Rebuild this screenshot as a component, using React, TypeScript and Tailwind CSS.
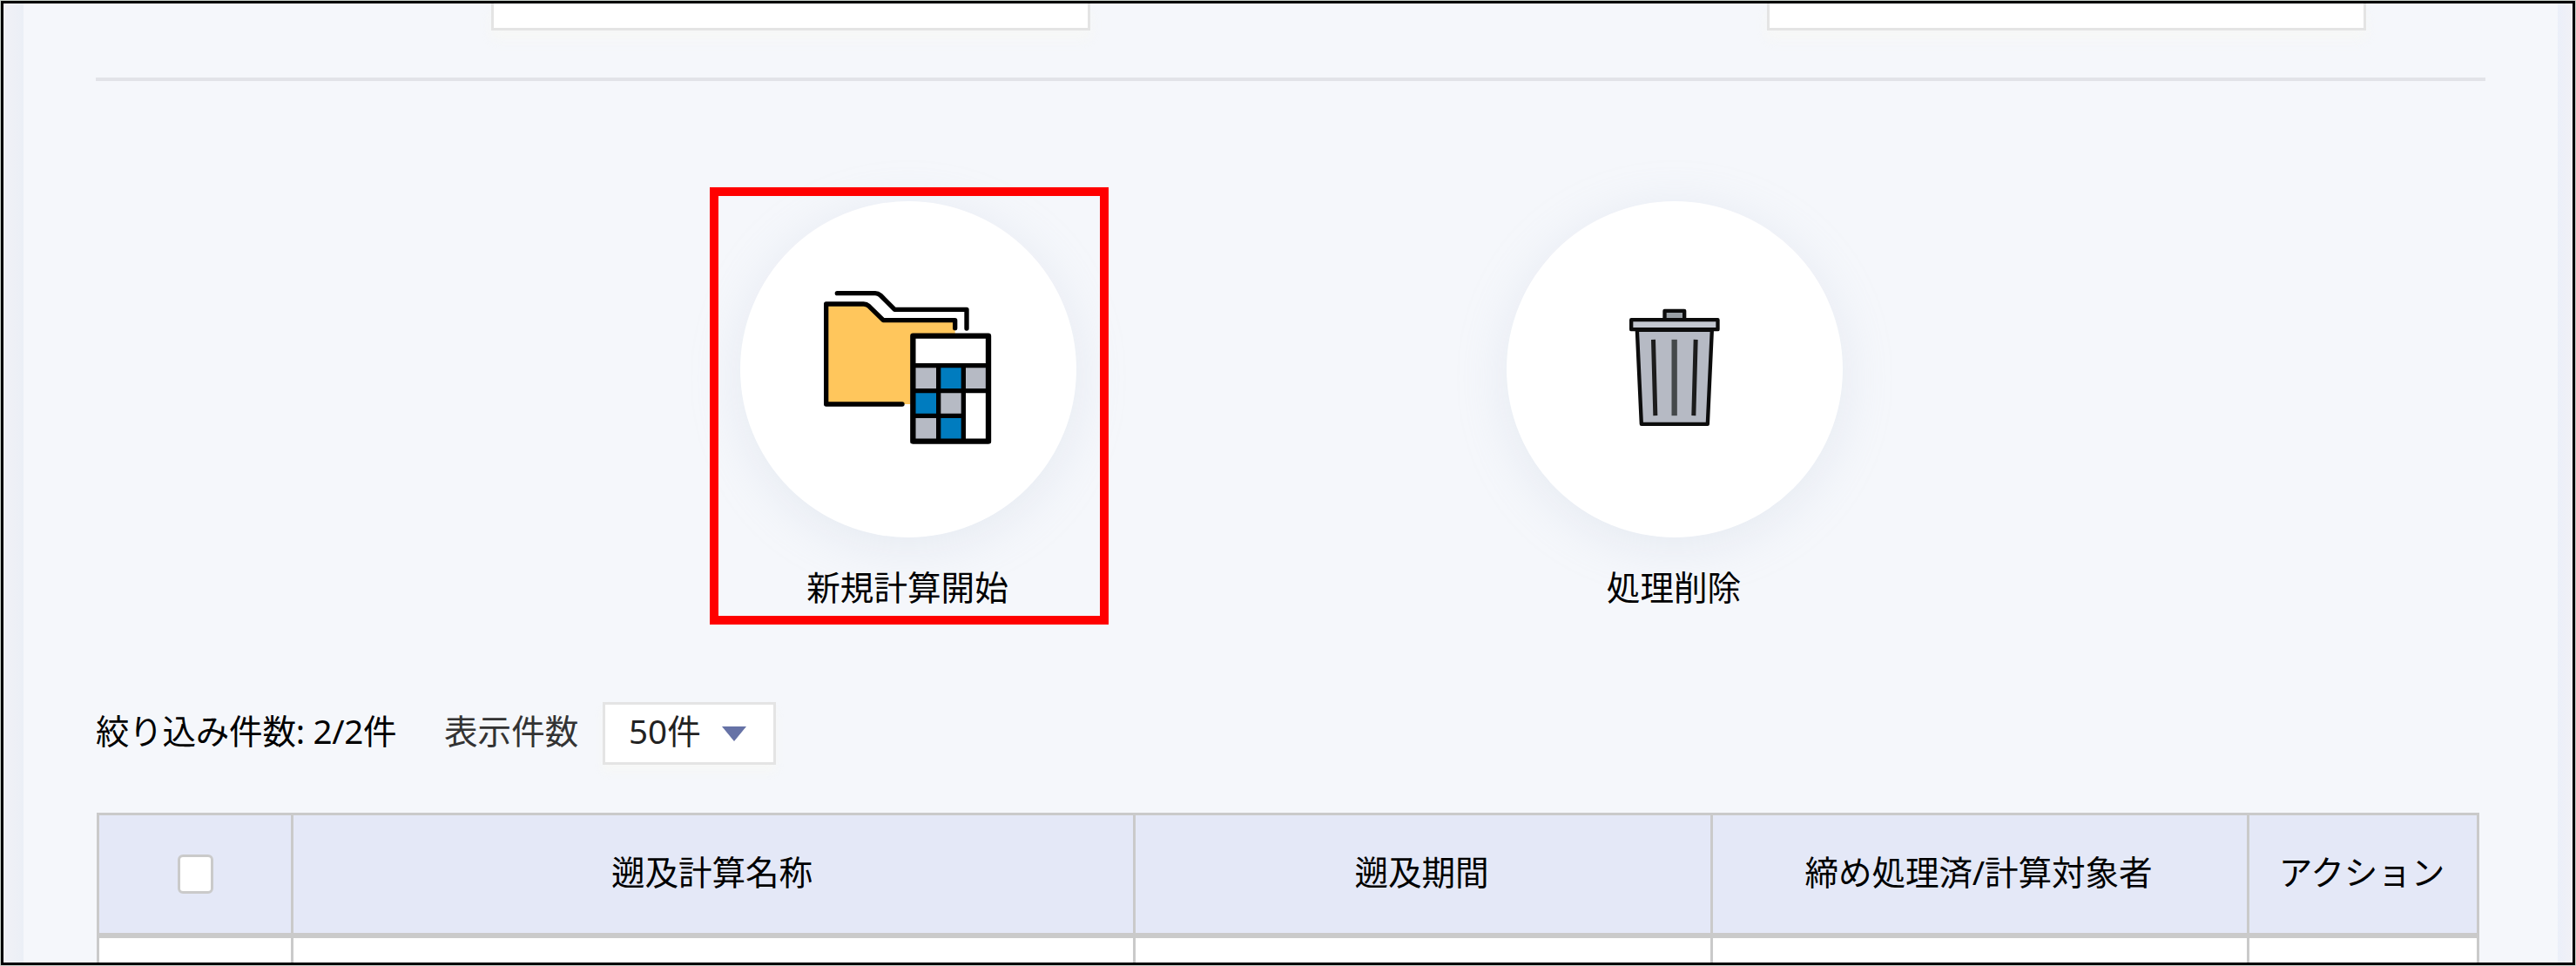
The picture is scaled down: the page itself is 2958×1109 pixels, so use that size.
import React from "react";

const columns = ["遡及計算名称", "遡及期間", "締め処理済/計算対象者", "アクション"];

const FolderCalcIcon = () => (
  <svg width="220" height="200" viewBox="10 12 660 600" fill="none">
    <path d="M57 87H186Q196 87 204 94L254 143H501V192H348V432H57Z" fill="#ffc65c" />
    <path
      d="M319 432H57V87H186Q196 87 204 94L254 143H501V170"
      stroke="#000"
      strokeWidth="16"
      strokeLinecap="round"
      strokeLinejoin="round"
    />
    <path
      d="M95 50H226Q236 50 244 57L293 106H541V171"
      stroke="#000"
      strokeWidth="16"
      strokeLinecap="round"
      strokeLinejoin="round"
    />
    <rect x="356" y="197" width="260" height="362" fill="#fff" />
    <path d="M356 300H444V386H356ZM530 300H616V386H530ZM444 386H530V472H444ZM356 472H444V559H356Z" fill="#b6bac4" />
    <path d="M444 300H530V386H444ZM356 386H444V472H356ZM444 472H530V559H444Z" fill="#007cbf" />
    <path d="M356 299H616M356 386H616M356 472H537M444 299V559M530 299V559" stroke="#000" strokeWidth="16" />
    <rect x="356" y="197" width="260" height="363" stroke="#000" strokeWidth="19" strokeLinejoin="round" />
  </svg>
);

const TrashIcon = () => (
  <svg width="140" height="160" viewBox="8.5 11.5 420 480" fill="none" stroke="#0c0c0c">
    <path d="M184 80V50H252V80" fill="#9aa0a6" strokeWidth="13" strokeLinejoin="round" />
    <path d="M89 116L104 440H332L347 116Z" fill="#b6bac4" strokeWidth="13" strokeLinejoin="round" />
    <rect x="69" y="81" width="298" height="33" fill="#c3c7d0" strokeWidth="13" strokeLinejoin="round" />
    <path d="M145 149L152 411M291 149L284 411" stroke="#1c1c1c" strokeWidth="15" />
    <path d="M217.5 149V411" stroke="#44484a" strokeWidth="19" />
  </svg>
);

const ActionButton = ({
  label,
  highlighted,
  children,
}: {
  label: string;
  highlighted?: boolean;
  children: React.ReactNode;
}) => (
  <button className="relative flex w-[386px] flex-col items-center">
    <span className="flex h-[386px] w-[386px] items-center justify-center rounded-full bg-white shadow-[0_10px_56px_rgba(190,200,218,0.28)]">
      {children}
    </span>
    <span className="mt-[37px] pr-0.5 leading-[40px]">{label}</span>
    {highlighted && (
      <span className="absolute -left-[35px] -top-4 h-[502px] w-[458px] border-[10px] border-[#ff0000]" />
    )}
  </button>
);

const InputBottom = () => (
  <div className="h-[31px] w-[688px] border-[3px] border-t-0 border-[#e4e4e4] bg-white shadow-[0_10px_14px_rgba(249,248,244,0.6)]" />
);

const App = () => {
  return (
    <div className="h-[1109px] w-[2958px] overflow-hidden bg-[#c9d0ca] p-px font-['Noto_Sans','Noto_Sans_CJK_JP',sans-serif] text-[38.6px] text-black">
      <div className="flex h-full w-full overflow-hidden border-[3px] border-black bg-[#f5f7fb]">
        <div className="w-[23px] shrink-0 bg-linear-to-r from-[#f1f1f6] to-[#ebeff6]" />
        <main className="w-[2910px] shrink-0">
          <div className="flex gap-[777px] pl-[537px]">
            <InputBottom />
            <InputBottom />
          </div>

          <div className="ml-[83px] mt-[54px] h-1 w-[2744px] bg-[#e2e3e8]" />

          <div className="mt-[138px] flex gap-[494px] pl-[823px]">
            <ActionButton label="新規計算開始" highlighted>
              <FolderCalcIcon />
            </ActionButton>
            <ActionButton label="処理削除">
              <TrashIcon />
            </ActionButton>
          </div>

          <div className="mt-28 flex items-center pl-[83px]">
            <span className="w-[400px] whitespace-nowrap pb-1 tracking-[-0.3px]">絞り込み件数: 2/2件</span>
            <span className="w-[182px] whitespace-nowrap pb-1 text-[#333]">表示件数</span>
            <div className="flex h-[72px] w-[199px] items-center border-[3px] border-[#e4e4e4] bg-white pl-[27px] text-[#222] shadow-[0_8px_10px_rgba(249,248,244,0.6)]">
              <span className="w-[107px] pb-1">50件</span>
              <svg width="28" height="17" viewBox="0 0 28 17">
                <path d="M0 0H28L14 17Z" fill="#6672a6" />
              </svg>
            </div>
          </div>

          <div className="ml-[84px] mt-[55px] w-[2736px] bg-[#cacaca] px-[3px] pt-[3px]">
            <div className="grid h-[135px] grid-cols-[220px_964px_660px_613px_261px] gap-[3px]">
              <div className="flex items-center justify-center bg-[#e4e8f7]">
                <span className="h-[45px] w-[41px] rounded-[6px] border-[3px] border-[#cacaca] bg-white" />
              </div>
              {columns.map((name) => (
                <div
                  key={name}
                  className="flex items-center justify-center whitespace-nowrap bg-[#e4e8f7] pb-1 pr-[3px] tracking-[-0.1px]"
                >
                  {name}
                </div>
              ))}
            </div>
            <div className="mt-1.5 grid h-[28px] grid-cols-[220px_964px_660px_613px_261px] gap-[3px]">
              <div className="bg-white" />
              {columns.map((name) => (
                <div key={name} className="bg-white" />
              ))}
            </div>
          </div>
        </main>
        <div className="w-[17px] shrink-0 bg-linear-to-r from-[#ebeff9] to-[#f1f1f6]" />
      </div>
    </div>
  );
};

export default App;
